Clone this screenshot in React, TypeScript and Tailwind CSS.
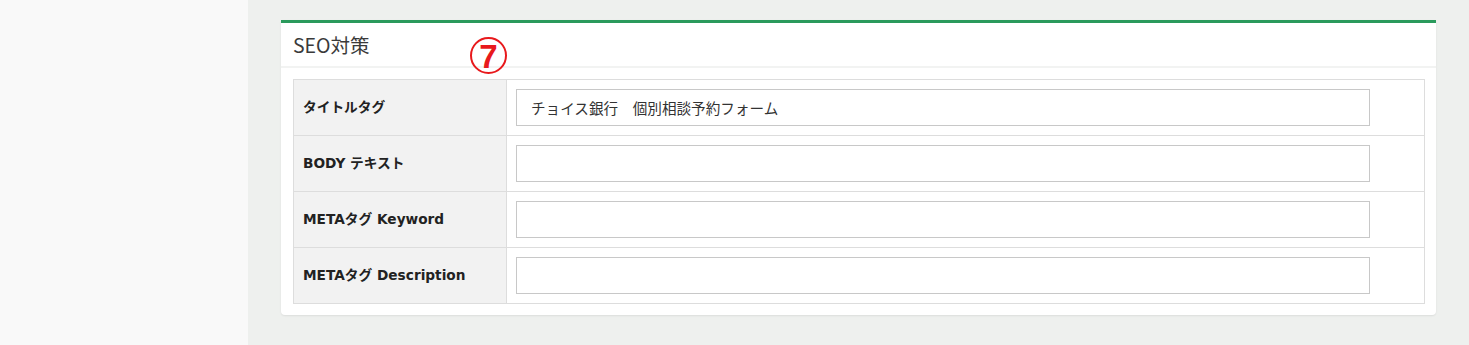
import React from 'react'

const rows = [
  { label: 'タイトルタグ', value: 'チョイス銀行　個別相談予約フォーム' },
  { label: 'BODY テキスト', value: '' },
  { label: 'METAタグ Keyword', value: '' },
  { label: 'METAタグ Description', value: '' },
]

export default function App() {
  return (
    <div
      className="flex h-[345px] w-[1469px] overflow-hidden bg-[#eef0ee]"
      style={{ fontFamily: '"DejaVu Sans", "Noto Sans CJK JP", sans-serif' }}
    >
      {/* Sidebar */}
      <div className="w-[248px] shrink-0 bg-[#f9f9f9]" />

      {/* Main */}
      <div className="flex-1 pl-[33px] pr-[33px] pt-[20px]">
        <div className="w-[1155px] rounded-b-[4px] border-t-[3px] border-[#2a9a5c] bg-white shadow-[0_1px_2px_rgba(0,0,0,0.08)]">
          {/* Header */}
          <div className="relative flex h-[45px] items-center border-b-2 border-[#f2f3f2] pl-[12px]">
            <h2
              className="text-[19.5px] font-normal text-[#3a3a3a]"
              style={{ fontFamily: '"Noto Sans CJK JP", sans-serif' }}
            >
              SEO対策
            </h2>
            <span
              className="absolute left-[189px] top-[14px] flex h-[37px] w-[37px] items-center justify-center rounded-full border-2 border-[#e8191c] pt-[1px] text-[33px] font-bold leading-none text-[#e8191c]"
              style={{ fontFamily: '"Liberation Sans", sans-serif' }}
            >
              7
            </span>
          </div>

          {/* Table */}
          <div className="px-[12px] pb-[11px] pt-[11px] pr-[11px]">
            <table className="w-[1132px] border-collapse">
              <tbody>
                {rows.map((r) => (
                  <tr key={r.label} className="h-[56px]">
                    <th className="w-[213px] border border-[#dddddd] bg-[#f2f2f2] pl-[9px] text-left text-[13.7px] font-bold text-[#222]">
                      {r.label}
                    </th>
                    <td className="border border-[#dddddd] pl-[9px]">
                      <div
                        className="flex h-[37px] w-[854px] items-center border border-[#c8c8c8] bg-white pl-[14px] text-[14.6px] text-[#333]"
                        style={{ fontFamily: '"Noto Sans CJK JP", sans-serif' }}
                      >
                        {r.value}
                      </div>
                    </td>
                  </tr>
                ))}
              </tbody>
            </table>
          </div>
        </div>
      </div>
    </div>
  )
}
